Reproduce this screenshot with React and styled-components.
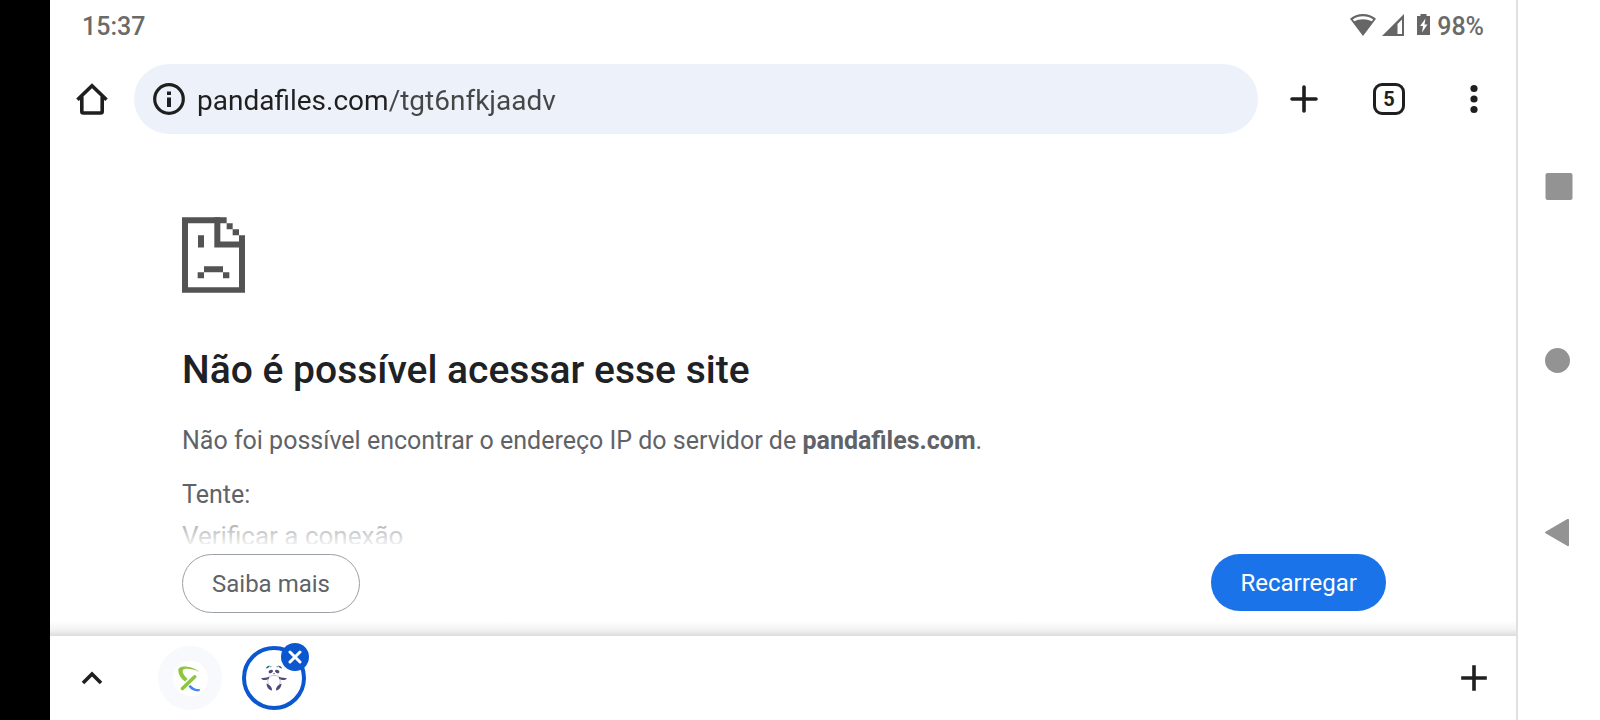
import styled, { createGlobalStyle } from 'styled-components'

const HomeIcon = () => (
  <svg width="32" height="32" viewBox="0 0 32 32" fill="none" stroke="#1f1f1f" strokeWidth="3.600">
    <path d="M1.500 16.800 16 2.800l14.500 14" />
    <path d="M5.800 13.500v15q0 1.500 1.500 1.500h17.400q1.500 0 1.500-1.500v-15" />
  </svg>
)

const InfoIcon = () => (
  <svg width="32" height="32" viewBox="0 0 32 32">
    <circle cx="16" cy="16" r="14.300" fill="none" stroke="#1f1f1f" strokeWidth="3.200" />
    <path d="M14 8.500h4v3.500h-4zM14 14.500h4V24h-4z" fill="#1f1f1f" />
  </svg>
)

const PlusIcon = ({ size, round }) => (
  <svg width={size} height={size} viewBox={`0 0 ${size} ${size}`}>
    <path
      d={`M${size / 2} 2V${size - 2}M2 ${size / 2}H${size - 2}`}
      stroke="#1f1f1f"
      strokeWidth="3.600"
      strokeLinecap={round ? 'round' : 'square'}
    />
  </svg>
)

const MenuIcon = () => (
  <svg width="8" height="30" viewBox="0 0 8 30" fill="#1f1f1f">
    <circle cx="4" cy="4.500" r="3.600" />
    <circle cx="4" cy="15" r="3.600" />
    <circle cx="4" cy="25.500" r="3.600" />
  </svg>
)

const ChevronIcon = () => (
  <svg width="22" height="14" viewBox="0 0 22 14">
    <path d="M2 12 11 3l9 9" fill="none" stroke="#1f1f1f" strokeWidth="3.600" />
  </svg>
)

const WifiIcon = () => (
  <svg width="26" height="22" viewBox="0 0 26 22" fill="#666">
    <path
      fillRule="evenodd"
      d="M13 0C8 0 3.500 1.700 0 4.700L13 22 26 4.700C22.500 1.700 18 0 13 0zm0 2.200c3.900 0 7.300 1.100 10.200 3.200l-1.400 1.900C19.200 6 16.300 5.200 13 5.200s-6.200.8-8.800 2.100L2.800 5.400C5.700 3.300 9.100 2.200 13 2.200z"
    />
  </svg>
)

const SignalIcon = () => (
  <svg width="22" height="22" viewBox="0 0 22 22" fill="#666">
    <path fillRule="evenodd" d="M22 0v22H0zM20 5.500 15.500 10v10H20z" />
  </svg>
)

const BatteryIcon = () => (
  <svg width="13" height="21" viewBox="0 0 13 21">
    <path d="M3.500 0h6v2H13v19H0V2h3.500z" fill="#666" />
    <path d="M8.500 4.500 3 12h3l-1 6.500 5.500-8H7.500z" fill="#fff" />
  </svg>
)

const SadPage = () => (
  <svg width="63" height="76" viewBox="0 0 189 227" fill="#535353" role="img" aria-label="Erro">
    <path d="M0 0h134v18H0zM0 0h18v227H0zM0 210h189v17H0zM171 54h18v173h-18z" />
    <path d="M97 0h18v91H97zM97 73h92v18H97zM134 18h18v18h-18zM152 36h19v18h-19z" />
    <path d="M48 54h18v37H48zM66 147h57v18H66zM47 165h19v18H47zM123 165h19v18h-19z" />
  </svg>
)

const RibbonLogo = () => (
  <svg width="35" height="35" viewBox="0 0 35 35">
    <circle cx="17.500" cy="17.500" r="17.500" fill="#fff" />
    <path d="M17.500 24c2.500 3 5.500 4.500 9.800 4.300l-1 2c-5 .2-9.300-1.800-10.800-5z" fill="#4285f4" />
    <path
      d="M26.500 11C20 5 5 3 5.300 9.500c.2 4.500 2.700 8 6.700 11l2.600-2.500C11.500 15 9.200 12 9.700 9.500 10.500 6.500 20 8 26.500 11z"
      fill="#8cc63f"
    />
    <path d="M21.700 15.800 9.500 27.500" fill="none" stroke="#8cc63f" strokeWidth="3.600" strokeLinecap="round" />
  </svg>
)

const PandaLogo = () => (
  <svg width="26" height="26" viewBox="0 0 26 26" fill="#51477a">
    <path d="M5 3.500C5.500 1.300 7.500.5 9 1L7 3zM21 3.500C20.500 1.300 18.500.5 17 1l2 2z" fill="#3d5568" />
    <path d="M9 1l2 .8-1.800.8zM17 1l-2 .8 1.800.8z" fill="#2bb673" />
    <ellipse cx="9.800" cy="6.500" rx="2.300" ry="1.600" transform="rotate(-25 9.800 6.500)" />
    <ellipse cx="16.200" cy="6.500" rx="2.300" ry="1.600" transform="rotate(25 16.200 6.500)" />
    <path d="M11.800 8h2.400L13 9.500z" fill="#2a9d8f" />
    <path d="M0 13.200c2.500-.4 5 0 8.500-1.700l-.8 2.500c-2.500 1.800-6.500 1.300-7.700-.8zM26 13.200c-2.500-.4-5 0-8.500-1.700l.8 2.500c2.500 1.800 6.500 1.300 7.700-.8z" />
    <path d="M5.500 18.500c.3 4 2 6.500 5.500 7 .2-3-1.500-5.500-5.500-7zM20.500 18.500c-.3 4-2 6.500-5.500 7-.2-3 1.500-5.500 5.500-7z" />
    <path d="M8 11.500c4-1.500 6-1.500 10 0M7.500 14c-1 1.500-1 3 0 5M18.500 14c1 1.500 1 3 0 5" fill="none" stroke="#c4bfd0" strokeWidth="1" />
  </svg>
)

const CloseIcon = () => (
  <svg width="14" height="14" viewBox="0 0 14 14">
    <path d="M2 2l10 10M12 2 2 12" stroke="#fff" strokeWidth="3" strokeLinecap="round" />
  </svg>
)

const App = () => (
  <>
    <GlobalStyle />
    <Device>
      <Cutout />
      <Screen>
        <StatusBar>
          <span>15:37</span>
          <StatusIcons>
            <WifiIcon />
            <SignalIcon />
            <Battery>
              <BatteryIcon />
              98%
            </Battery>
          </StatusIcons>
        </StatusBar>
        <Toolbar>
          <IconButton aria-label="Página inicial"><HomeIcon /></IconButton>
          <Omnibox>
            <InfoIcon />
            <Address aria-label="Endereço" defaultValue="pandafiles.com/tgt6nfkjaadv" />
          </Omnibox>
          <Actions>
            <IconButton aria-label="Nova guia"><PlusIcon size={28} round /></IconButton>
            <IconButton aria-label="Guias abertas"><TabCount>5</TabCount></IconButton>
            <IconButton aria-label="Menu"><MenuIcon /></IconButton>
          </Actions>
        </Toolbar>
        <Page>
          <Message>
            <SadPage />
            <Title>Não é possível acessar esse site</Title>
            <Text>
              Não foi possível encontrar o endereço IP do servidor de <strong>pandafiles.com</strong>.
            </Text>
            <Text>Tente:</Text>
            <Suggestion>Verificar a conexão</Suggestion>
          </Message>
          <Buttons>
            <OutlineButton>Saiba mais</OutlineButton>
            <ReloadButton>Recarregar</ReloadButton>
          </Buttons>
        </Page>
        <TabStrip>
          <IconButton aria-label="Expandir"><ChevronIcon /></IconButton>
          <Tabs>
            <Tab aria-label="Guia 1"><RibbonLogo /></Tab>
            <TabSlot>
              <Tab $active aria-label="Guia 2"><PandaLogo /></Tab>
              <CloseButton aria-label="Fechar guia"><CloseIcon /></CloseButton>
            </TabSlot>
          </Tabs>
          <IconButton aria-label="Nova guia no grupo"><PlusIcon size={26} /></IconButton>
        </TabStrip>
      </Screen>
      <SystemNav>
        <IconButton aria-label="Recentes">
          <svg width="28" height="28" viewBox="0 0 28 28"><rect x=".5" width="27" height="27" rx="2" fill="#939393" /></svg>
        </IconButton>
        <IconButton aria-label="Início">
          <svg width="28" height="28" viewBox="0 0 28 28"><circle cx="12.500" cy="14.500" r="12.500" fill="#939393" /></svg>
        </IconButton>
        <IconButton aria-label="Voltar">
          <svg width="28" height="28" viewBox="0 0 28 28">
            <path d="M1 13.500 23 .8v25.400z" fill="#939393" stroke="#939393" strokeWidth="2" strokeLinejoin="round" />
          </svg>
        </IconButton>
      </SystemNav>
    </Device>
  </>
)

export default App

const GlobalStyle = createGlobalStyle`
  * {
    box-sizing: border-box;
  }
  body {
    margin: 0;
    background: #fff;
    font-family: Roboto, sans-serif;
  }
  button, input {
    padding: 0;
    border: 0;
    background: none;
    font-family: inherit;
  }
  svg {
    display: block;
    flex-shrink: 0;
  }
`
const Device = styled.div`
  display: flex;
  min-height: 100vh;
`
const Cutout = styled.div`
  width: 50px;
  background: #000;
`
const Screen = styled.main`
  flex: 1;
  display: flex;
  flex-direction: column;
`
const StatusBar = styled.div`
  display: flex;
  justify-content: space-between;
  align-items: center;
  height: 52px;
  padding: 0 32px;
  font-size: 25px;
  font-weight: 500;
  color: #6a6a6a;
`
const StatusIcons = styled.div`
  display: flex;
  align-items: center;
  gap: 6px;
  svg {
    margin-bottom: 3px;
  }
`
const Battery = styled.div`
  display: flex;
  align-items: center;
  gap: 7px;
  padding-left: 7px;
`
const Toolbar = styled.header`
  display: flex;
  align-items: center;
  padding: 12px 10px 0;
`
const IconButton = styled.button`
  display: flex;
  align-items: center;
  justify-content: center;
  width: 64px;
  height: 64px;
`
const Omnibox = styled.div`
  flex: 1;
  display: flex;
  align-items: center;
  gap: 12px;
  height: 70px;
  margin: 0 14px 0 10px;
  padding: 0 19px;
  border-radius: 35px;
  background: #ecf1fa;
`
/* the host part is darker than the path */
const Address = styled.input`
  flex: 1;
  padding-top: 4px;
  font-size: 28px;
  line-height: 40px;
  color: transparent;
  background: linear-gradient(90deg, #1f1f1f 192px, #444746 192px);
  background-clip: text;
  outline: none;
`
const Actions = styled.div`
  display: flex;
  gap: 21px;
`
const TabCount = styled.span`
  width: 32px;
  border: 3px solid #1f1f1f;
  border-radius: 9px;
  font-size: 20px;
  font-weight: 700;
  line-height: 26px;
  text-align: center;
  color: #1f1f1f;
`
const Page = styled.section`
  flex: 1;
  display: flex;
  flex-direction: column;
  padding: 83px 130px 0 132px;
  background: linear-gradient(0deg, #dcdcdc, #f2f2f2 6px, #fff 15px);
`
const Message = styled.div`
  position: relative;
  height: 327px;
  overflow: hidden;
  color: #5f6368;
  &::after {
    content: '';
    position: absolute;
    inset: auto 0 0;
    height: 38px;
    background: linear-gradient(0deg, rgba(255, 255, 255, .9), rgba(255, 255, 255, .5) 20px, rgba(255, 255, 255, 0));
  }
`
const Title = styled.h1`
  margin: 53px 0 28px;
  font-size: 39px;
  font-weight: 500;
  line-height: 48px;
  color: #202124;
`
const Text = styled.p`
  margin: 0 0 16px;
  font-size: 25px;
  line-height: 38px;
`
const Suggestion = styled(Text)`
  margin-top: -13px;
  font-size: 26px;
`
const Buttons = styled.div`
  display: flex;
  justify-content: space-between;
  align-items: flex-start;
  padding: 10px 0 23px;
`
const PillButton = styled.button`
  padding: 2px 29px 0;
  border-radius: 30px;
  font-size: 24px;
  line-height: 55px;
`
const OutlineButton = styled(PillButton)`
  border: 1px solid #9aa0a6;
  background: #fff;
  color: #5f6368;
`
const ReloadButton = styled(PillButton)`
  background: #1a73e8;
  color: #fff;
`
const TabStrip = styled.footer`
  display: flex;
  align-items: center;
  height: 84px;
  padding: 0 10px;
  background: #fff;
`
const Tabs = styled.div`
  flex: 1;
  display: flex;
  gap: 20px;
  padding-left: 34px;
`
const TabSlot = styled.div`
  position: relative;
`
const Tab = styled.button`
  display: flex;
  align-items: center;
  justify-content: center;
  width: 64px;
  height: 64px;
  border: ${props => props.$active ? '4px solid #0b57d0' : '0'};
  border-radius: 50%;
  background: ${props => props.$active ? '#fff' : '#f8f9fd'};
`
const CloseButton = styled.button`
  position: absolute;
  top: -3px;
  right: -3px;
  display: flex;
  align-items: center;
  justify-content: center;
  width: 28px;
  height: 28px;
  border-radius: 50%;
  background: #0b57d0;
`
const SystemNav = styled.nav`
  display: flex;
  flex-direction: column;
  align-items: center;
  justify-content: center;
  gap: 109px;
  width: 84px;
  border-left: 2px solid #e0e0e0;
`
